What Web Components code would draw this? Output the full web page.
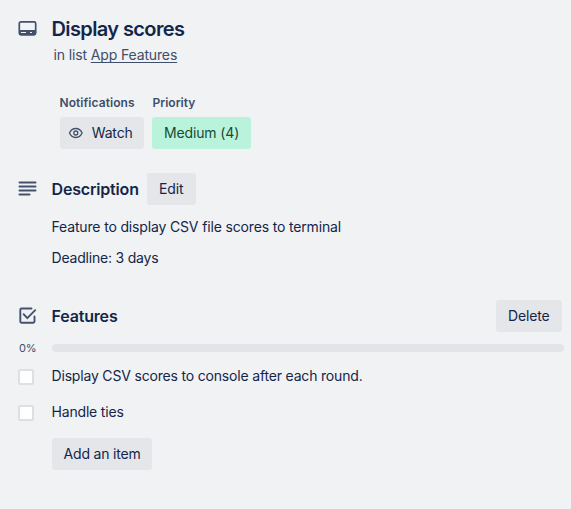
<!DOCTYPE html>
<html lang="en">
<head>
<meta charset="utf-8">
<title>Display scores</title>
<style>
html,body{margin:0;background:#f1f2f4}
body{font-family:Inter,"Liberation Sans",sans-serif;font-size:14px;line-height:20px;color:#132649}
</style>
</head>
<body>
<task-card></task-card>
<script>
const define = (name, html) => customElements.define(name, class extends HTMLElement {
  constructor() {
    super();
    const t = document.createElement('template');
    t.innerHTML = html;
    this.attachShadow({ mode: 'open' }).append(t.content.cloneNode(true));
  }
});

define('card-button', `<style>
:host{display:flex;align-items:center;box-sizing:border-box;height:32px;padding:0 0 0 12px;border-radius:3px;background:#e4e6e9;white-space:nowrap;flex:none;letter-spacing:-.14px}
:host([kind=priority]){background:#baf3db;color:#164b35}
::slotted(svg){display:block;flex:none;margin-right:8px}
</style><slot></slot>`);

define('card-row', `<style>
:host{display:grid;grid-template-columns:34px 1fr;padding-left:18px}
.icon{display:flex}
.body{display:flex;align-items:center;min-width:0}
</style><div class="icon"><slot name="icon"></slot></div><div class="body"><slot></slot></div>`);

define('meta-field', `<style>
:host{display:block}
.label{font-size:12px;font-weight:600;line-height:16px;color:#3f4e69;margin-bottom:6px;white-space:nowrap}
</style><div class="label"><slot name="label"></slot></div><slot></slot>`);

define('progress-bar', `<style>
:host{display:flex;align-items:center;height:12px;padding-left:19px}
.pct{width:33px;font-size:11px;line-height:12px;color:#3f4e69;letter-spacing:-.2px}
.track{width:512px;height:8px;border-radius:4px;background:#e2e4e8}
</style><div class="pct"><slot></slot></div><div class="track"></div>`);

define('check-item', `<style>
:host{display:grid;grid-template-columns:33.5px 1fr;padding-left:18px;height:20px;white-space:nowrap;letter-spacing:-.18px}
.box{box-sizing:border-box;width:16px;height:16px;margin-top:3px;border:2px solid #dddfe4;border-radius:2px;background:#fff}
</style><div class="box"></div><div><slot></slot></div>`);

define('task-card', `<style>
:host{display:block;width:571px;height:509px;overflow:hidden}
svg{display:block;fill:none;stroke:#44516c}
h1,h2,p{margin:0;white-space:nowrap}
h1{font-size:20px;line-height:24px;font-weight:600;letter-spacing:-.61px;margin-left:-.5px}
h2{font-size:16px;line-height:20px;font-weight:600;letter-spacing:-.17px;margin-left:-.5px}
.head{padding-top:17px}
.sub{margin:4px 0 0 53.6px;color:#3f4e69;letter-spacing:-.14px}
.sub u{text-underline-offset:2px;text-decoration-skip-ink:none}
.meta{display:flex;gap:8px;margin:30px 0 0 60px}
.notify [slot=label]{margin-left:-.5px;letter-spacing:.06px}
.desc{margin-top:24px}
.text{margin:12px 0 0 51.5px;display:grid;gap:11px;letter-spacing:-.155px}
.text p + p{letter-spacing:-.2px}
.feat{margin-top:32px}
.space{flex:1}
progress-bar{margin-top:10px}
.items{display:grid;gap:16px;margin-top:12px}
.add{width:100px;margin:16px 0 0 52px;padding-left:11.600px;letter-spacing:-.2px}
</style>
<card-row class="head"><svg slot="icon" width="20" height="24" viewBox="0 0 20 24"><rect x="1.300" y="4.800" width="16.400" height="12.900" rx="1.600" stroke-width="1.700"/><path fill="#44516c" stroke="none" fill-rule="evenodd" d="M1 13h17v3.400a2 2 0 0 1-2 2H3a2 2 0 0 1-2-2zM3 15v1h5v-1zM12 15v1h2v-1z"/></svg><h1>Display scores</h1></card-row>
<p class="sub">in list <u>App Features</u></p>
<div class="meta">
<meta-field class="notify"><span slot="label">Notifications</span><card-button style="width:84px;padding-left:7.700px"><svg width="16" height="16" viewBox="0 0 16 16" stroke-width="1.300"><path d="M1.500 8C2.700 5.200 5 3.500 7.800 3.500S12.900 5.200 14.100 8C12.900 10.800 10.600 12.500 7.800 12.500S2.700 10.800 1.500 8Z"/><circle cx="7.800" cy="8" r="2"/></svg><span>Watch</span></card-button></meta-field>
<meta-field><span slot="label" style="margin-left:.6px">Priority</span><card-button kind="priority" style="width:99px"><span>Medium (4)</span></card-button></meta-field>
</div>
<card-row class="desc"><svg slot="icon" width="20" height="32" viewBox="0 0 20 32" stroke-width="2" stroke-linecap="round"><path d="M1.500 9.500H17.500M1.500 13.500H17.500M1.500 17.500H17.500M1.500 21.500H11.500"/></svg><h2 style="width:95.500px">Description</h2><card-button style="width:49px">Edit</card-button></card-row>
<div class="text"><p>Feature to display CSV file scores to terminal</p><p>Deadline: 3 days</p></div>
<card-row class="feat"><svg slot="icon" width="20" height="32" viewBox="0 0 20 32" stroke-width="1.900" stroke-linecap="round" stroke-linejoin="round"><path d="M13.500 8.500H3.500a1.200 1.200 0 0 0-1.200 1.200V21.500a1.200 1.200 0 0 0 1.200 1.200H15.300a1.200 1.200 0 0 0 1.200-1.200V16.500M5.600 14.200L9.300 18.200L17.200 10.200"/></svg><h2>Features</h2><span class="space"></span><card-button style="width:66px;margin-right:9px">Delete</card-button></card-row>
<progress-bar>0%</progress-bar>
<div class="items"><check-item>Display CSV scores to console after each round.</check-item><check-item>Handle ties</check-item></div>
<card-button class="add">Add an item</card-button>`);
</script>
</body>
</html>
